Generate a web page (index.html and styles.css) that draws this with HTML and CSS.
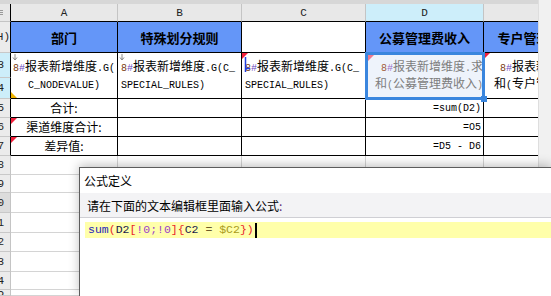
FILE: index.html
```
<!DOCTYPE html>
<html>
<head>
<meta charset="utf-8">
<link rel="stylesheet" href="styles.css">
</head>
<body>
<div class="app">
  <div class="sheet">
    <div class="band"></div>
    <div class="ch corner"><svg width="6" height="17" viewBox="0 0 6 17"><rect x="0" y="6" width="3" height="1" fill="#9a9a9a"/><rect x="0" y="8" width="3" height="1" fill="#9a9a9a"/><rect x="0" y="10" width="3" height="1" fill="#9a9a9a"/></svg></div>
    <div class="ch">A</div>
    <div class="ch">B</div>
    <div class="ch">C</div>
    <div class="ch sel">D</div>
    <div class="ch last"><span class="wide ctr">E</span></div>

    <div class="rh t hlab"><span>2(H)</span></div>
    <div class="c t hd">部门</div>
    <div class="c t hd">特殊划分规则</div>
    <div class="c t hd blank"></div>
    <div class="c t hd">公募管理费收入</div>
    <div class="c t hd e"><span class="wide ctr">专户管理费收入</span></div>

    <div class="rh t sel"><span>3</span></div>
    <div class="c t span2 tx ctr">
      <svg class="arrow" width="6" height="7" viewBox="0 0 6 7"><path d="M3 0V6M1 3.5L3 6L5 3.5" stroke="#8a8a8a" fill="none" stroke-width="1"/></svg>
      <i class="tri-bl"></i>
      <div><span class="l n8">8</span><span class="l hs">#</span>报表新增维度<span class="l">.G(</span><br><span class="l">C_NODEVALUE)</span></div>
    </div>
    <div class="c t span2 tx lft">
      <svg class="arrow" width="6" height="7" viewBox="0 0 6 7"><path d="M3 0V6M1 3.5L3 6L5 3.5" stroke="#8a8a8a" fill="none" stroke-width="1"/></svg>
      <div><span class="l n8">8</span><span class="l hs">#</span>报表新增维度<span class="l">.G(C_</span><br><span class="l">SPECIAL_RULES)</span></div>
    </div>
    <div class="c t span2 tx lft">
      <i class="tri"></i>
      <svg class="mark" width="7" height="17" viewBox="0 0 7 17"><path d="M1.5 1V16M1.5 12.5H6" stroke="#1f3fe0" fill="none" stroke-width="1.5"/></svg>
      <div><span class="l n8">8</span><span class="l hs">#</span>报表新增维度<span class="l">.G(C_</span><br><span class="l">SPECIAL_RULES)</span></div>
    </div>
    <div class="c t span2 dsel">
      <div class="clip tx rgt grey"><div><span class="l n8">8</span><span class="l hs">#</span>报表新增维度<span class="l">.</span>求<br>和<span class="l">(</span>公募管理费收入<span class="l">)</span></div></div>
      <i class="tri pink"></i>
      <i class="frame"></i>
      <i class="handle"></i>
    </div>
    <div class="c t span2 e">
      <div class="wide tx rgt"><div><span class="l n8">8</span><span class="l hs">#</span>报表新增维度<span class="l">.</span>求<br>和<span class="l">(</span>专户管理费收入<span class="l">)</span></div></div>
      <i class="tri"></i>
    </div>
    <div class="rh t sel"><span>4</span></div>

    <div class="rh t"><span>5</span></div>
    <div class="c t tx ctr">合计:</div>
    <div class="c t"></div>
    <div class="c t"></div>
    <div class="c t tx rgt mono">=sum(D2)</div>
    <div class="c t e"></div>

    <div class="rh t"><span>6</span></div>
    <div class="c t tx ctr"><i class="tri"></i>渠道维度合计:</div>
    <div class="c t"></div>
    <div class="c t"></div>
    <div class="c t tx rgt mono">=O5</div>
    <div class="c t e"></div>

    <div class="rh t"><span>7</span></div>
    <div class="c t tx ctr"><i class="tri"></i>差异值:</div>
    <div class="c t"></div>
    <div class="c t"></div>
    <div class="c t tx rgt mono">=D5 - D6</div>
    <div class="c t e"></div>

    <div class="rh"><span>8</span></div>
    <div class="c"></div><div class="c"></div><div class="c"></div><div class="c"></div><div class="c e"></div>
    <div class="rh"><span>9</span></div>
    <div class="c"></div><div class="c"></div><div class="c"></div><div class="c"></div><div class="c e"></div>
    <div class="rh cur"><span>10</span></div>
    <div class="c"></div><div class="c"></div><div class="c"></div><div class="c"></div><div class="c e"></div>
    <div class="rh"><span>11</span></div>
    <div class="c"></div><div class="c"></div><div class="c"></div><div class="c"></div><div class="c e"></div>
    <div class="rh"><span>12</span></div>
    <div class="c"></div><div class="c"></div><div class="c"></div><div class="c"></div><div class="c e"></div>
    <div class="rh"><span>13</span></div>
    <div class="c"></div><div class="c"></div><div class="c"></div><div class="c"></div><div class="c e"></div>
    <div class="rh"><span>14</span></div>
    <div class="c"></div><div class="c"></div><div class="c"></div><div class="c"></div><div class="c e"></div>
    <div class="rh"><span>15</span></div>
    <div class="c"></div><div class="c"></div><div class="c"></div><div class="c"></div><div class="c e"></div>
  </div>
  <div class="vscroll"></div>
</div>

<div class="dialog">
  <div class="dtitle">公式定义</div>
  <div class="dlabel">请在下面的文本编辑框里面输入公式<span class="colon">:</span></div>
  <div class="deditor">
    <div class="dline"><span class="kw">sum</span><span class="br">(</span><span class="ref">D2</span><span class="br">[</span><span class="ex">!0;!0</span><span class="br">]{</span><span class="ref">C2</span><span class="op"> = </span><span class="par">$C2</span><span class="br">})</span><i class="caret"></i></div>
  </div>
</div>
</body>
</html>
```

FILE: styles.css
```
html, body {
  margin: 0;
  padding: 0;
}
body {
  width: 551px;
  height: 296px;
  overflow: hidden;
  position: relative;
  background: #fff;
  font-family: "Noto Sans CJK SC", "Noto Sans", sans-serif;
  color: #000;
}
.app {
  display: flex;
  height: 296px;
}
.sheet {
  display: grid;
  grid-template-columns: 11px 107px 124px 124px 118px 54px;
  grid-template-rows: 4px 18px 31px 25px 21px 19px 19px 19px 19px 18px 20px 20px 19px 20px 18px 6px;
  width: 538px;
  height: 296px;
  overflow: hidden;
  background: #fff;
}
.vscroll {
  width: 13px;
  height: 296px;
  box-sizing: border-box;
  background: #f1f1f1;
  border-left: 1px solid #dedede;
}
.band {
  grid-column: 1 / -1;
  background: #d7d7d7;
}
.ch {
  box-sizing: border-box;
  background: #e8e8e8;
  border-right: 1px solid #c4c4c4;
  border-bottom: 1px solid #000;
  display: flex;
  align-items: center;
  justify-content: center;
  overflow: hidden;
  font: 11px "Liberation Mono", monospace;
  color: #222;
}
.ch.corner {
  border-right-color: #000;
  border-bottom-color: #c4c4c4;
  justify-content: flex-start;
}
.ch.sel { background: #cdeefa; }
.ch.last {
  border-right: none;
  justify-content: flex-start;
}
.wide {
  flex: none;
  width: 118px;
  height: 100%;
  display: flex;
  align-items: center;
}
.wide.ctr { justify-content: center; }

.rh {
  box-sizing: border-box;
  background: #ebebeb;
  border-right: 1px solid #c4c4c4;
  border-bottom: 1px solid #c8c8c8;
  overflow: hidden;
  display: flex;
  justify-content: flex-end;
  align-items: center;
  font: 11px "Liberation Mono", monospace;
  color: #222;
}
.rh span {
  flex: none;
  white-space: nowrap;
  padding-right: 6px;
}
.rh.hlab span { padding-right: 0; }
.rh.t { border-right-color: #000; }
.rh.sel { background: #cdeefa; }
.rh.cur { background: #dcdcdc; }

.c {
  box-sizing: border-box;
  position: relative;
  background: #fff;
  border-right: 1px solid #d4d4d4;
  border-bottom: 1px solid #d4d4d4;
  overflow: hidden;
  font-size: 12px;
}
.c.t {
  border-right-color: #000;
  border-bottom-color: #000;
}
.c.e { border-right: none; }
.span2 { grid-row: span 2; }

.hd {
  background: #6496f8;
  font-weight: 700;
  font-size: 13px;
  display: flex;
  align-items: center;
  justify-content: center;
  white-space: nowrap;
}
.hd.blank { background: #fff; }
.hd.e {
  background: #6496f8;
  justify-content: flex-start;
}

.tx {
  display: flex;
  align-items: center;
  line-height: 14px;
  font-size: 12px;
  white-space: nowrap;
}
.tx.ctr { justify-content: center; text-align: center; }
.tx.lft { justify-content: flex-start; padding-left: 3px; }
.tx.rgt { justify-content: flex-end; text-align: right; }
.mono {
  font: 10px "Liberation Mono", monospace;
  padding-right: 2px;
}
.l {
  font-family: "Liberation Mono", monospace;
  font-size: 10px;
}
.n8 { color: #7a3c10; }
.hs { color: #6a48c0; }
.grey { color: #7d7d7d; }
.grey .l { color: #7d7d7d; }
.grey .n8 { color: #a0603a; }
.grey .hs { color: #9a70c8; }

.dsel {
  overflow: visible;
  background: #eef3fb;
}
.clip {
  height: 100%;
  overflow: hidden;
  background: #eef3fb;
}
.frame {
  position: absolute;
  left: -1px;
  top: -1px;
  right: -2px;
  bottom: -2px;
  border: 3px solid #3a86de;
  z-index: 3;
}
.handle {
  position: absolute;
  right: -4px;
  bottom: -4px;
  width: 6px;
  height: 6px;
  background: #3a86de;
  z-index: 4;
}

.tri {
  position: absolute;
  top: 0;
  left: 0;
  width: 0;
  height: 0;
  border-top: 6px solid #f2203c;
  border-right: 6px solid transparent;
}
.tri.pink {
  border-top-color: #f07a90;
  left: 2px;
  top: 2px;
  z-index: 2;
}
.tri-bl {
  position: absolute;
  bottom: 0;
  left: 0;
  width: 0;
  height: 0;
  border-bottom: 6px solid #f0b400;
  border-right: 6px solid transparent;
}
.arrow {
  position: absolute;
  top: 1px;
  left: 1px;
}
.mark {
  position: absolute;
  left: 2px;
  top: 3px;
}

.dialog {
  position: absolute;
  left: 79px;
  top: 167px;
  width: 472px;
  height: 129px;
  box-sizing: border-box;
  border-top: 1px solid #5c5c5c;
  border-left: 1px solid #5c5c5c;
  background: #fff;
  box-shadow: 0 -2px 10px rgba(0, 0, 0, 0.25);
  z-index: 10;
  display: flex;
  flex-direction: column;
}
.dtitle {
  height: 25px;
  padding-left: 4px;
  display: flex;
  align-items: center;
  font-size: 12px;
}
.dlabel {
  height: 24px;
  background: #f3f3f5;
  border-bottom: 1px solid #cfcfd4;
  padding-left: 7px;
  display: flex;
  align-items: center;
  font-size: 12px;
}
.colon { color: #5a2a7a; }
.deditor {
  padding: 4px 0 0 5px;
}
.dline {
  height: 16px;
  background: #ffffaa;
  padding-left: 3px;
  display: flex;
  align-items: center;
  font: 11.5px/16px "Liberation Mono", monospace;
  white-space: pre;
}
.kw { color: #1d1dbb; }
.br { color: #e8252b; }
.ref { color: #1a1a4a; }
.ex { color: #9b3fc8; }
.op { color: #6d5a2a; }
.par { color: #a89a1c; }
.caret {
  display: block;
  width: 2px;
  height: 15px;
  background: #000;
  margin-left: 1px;
}
```
